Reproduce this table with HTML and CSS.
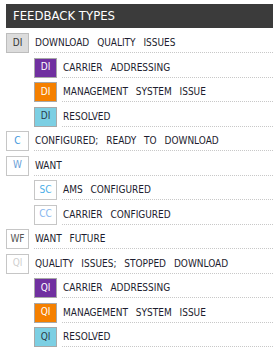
FILE: index.html
```html
<!DOCTYPE html>
<html>
<head>
<meta charset="utf-8">
<link rel="stylesheet" href="styles.css">
</head>
<body>
<div class="panel">
  <div class="header">FEEDBACK TYPES</div>
  <div class="list">
    <div class="row"><span class="badge b-grey">DI</span><span class="label">DOWNLOAD QUALITY ISSUES</span></div>
    <div class="row sub"><span class="badge b-purple">DI</span><span class="label">CARRIER ADDRESSING</span></div>
    <div class="row sub"><span class="badge b-orange">DI</span><span class="label">MANAGEMENT SYSTEM ISSUE</span></div>
    <div class="row sub"><span class="badge b-blue">DI</span><span class="label">RESOLVED</span></div>
    <div class="row"><span class="badge b-white t-c">C</span><span class="label">CONFIGURED; READY TO DOWNLOAD</span></div>
    <div class="row"><span class="badge b-white t-w">W</span><span class="label">WANT</span></div>
    <div class="row sub"><span class="badge b-white t-sc">SC</span><span class="label">AMS CONFIGURED</span></div>
    <div class="row sub"><span class="badge b-white t-cc">CC</span><span class="label">CARRIER CONFIGURED</span></div>
    <div class="row"><span class="badge b-white t-wf">WF</span><span class="label">WANT FUTURE</span></div>
    <div class="row"><span class="badge b-white t-qi">QI</span><span class="label">QUALITY ISSUES; STOPPED DOWNLOAD</span></div>
    <div class="row sub"><span class="badge b-purple">QI</span><span class="label">CARRIER ADDRESSING</span></div>
    <div class="row sub"><span class="badge b-orange">QI</span><span class="label">MANAGEMENT SYSTEM ISSUE</span></div>
    <div class="row sub"><span class="badge b-blue">QI</span><span class="label">RESOLVED</span></div>
  </div>
</div>
</body>
</html>
```
FILE: styles.css
```css
html, body {
  margin: 0;
  padding: 0;
  background: #ffffff;
}
body {
  padding: 4px 0 0 6px;
  font-family: "DejaVu Sans", "Liberation Sans", sans-serif;
  font-stretch: condensed;
}
.header {
  height: 24px;
  line-height: 24px;
  background: #3b3b3b;
  color: #ffffff;
  font-size: 13px;
  padding-left: 7px;
}
.list {
  display: flex;
  flex-direction: column;
  gap: 4.5px;
  margin-top: 5px;
}
.row {
  display: flex;
  height: 20px;
}
.row.sub {
  padding-left: 28px;
}
.badge {
  box-sizing: border-box;
  width: 23px;
  height: 20px;
  border: 1px solid #a8a8a8;
  display: flex;
  align-items: center;
  justify-content: center;
  font-size: 10px;
  padding-bottom: 2px;
}
.label {
  flex: 1;
  margin-left: 5px;
  padding-left: 1px;
  border-bottom: 1px dotted #c8c8c8;
  display: flex;
  align-items: center;
  font-size: 10px;
  color: #1c1c2e;
  word-spacing: 5px;
  white-space: nowrap;
}
.b-grey { background: #dcdcdc; border-color: #bdbdbd; color: #333; }
.b-purple { background: #7030a0; color: #ffffff; }
.b-orange { background: #f58000; color: #ffffff; }
.b-blue { background: #7ccfe3; color: #2a3a4a; }
.b-white { background: #ffffff; border-color: #c6c6c6; }
.t-c { color: #3d98dc; }
.t-w { color: #6b9fd8; }
.t-sc { color: #4aaee8; }
.t-cc { color: #86b6ee; }
.t-wf { color: #555555; }
.t-qi { color: #cfcfcf; }
```
